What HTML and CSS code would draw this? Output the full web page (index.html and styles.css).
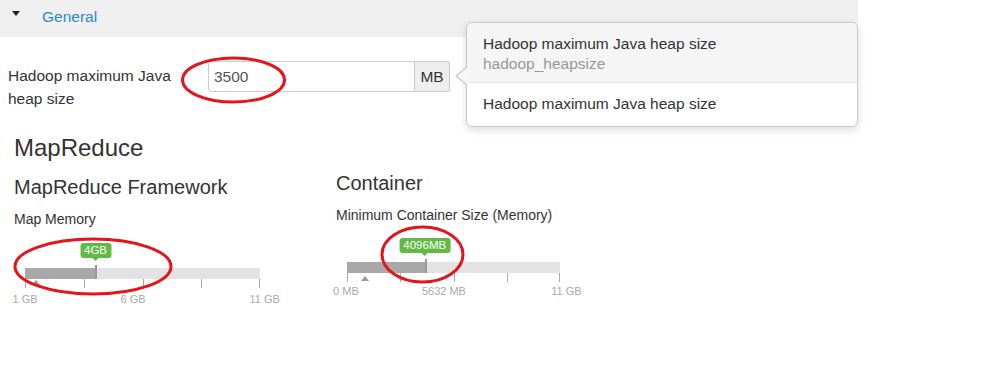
FILE: index.html
```html
<!DOCTYPE html>
<html lang="en">
<head>
    <meta charset="UTF-8">
    <title>Customize Services</title>
    <link rel="stylesheet" href="styles.css">
</head>
<body>
    <div class="page">
        <div class="panel-heading">
            <span class="caret"></span>
            <a class="panel-title" href="#">General</a>
        </div>

        <div class="form-row">
            <label class="control-label">Hadoop maximum Java heap size</label>
            <div class="input-group">
                <input class="form-control" type="text" value="3500">
                <span class="input-addon">MB</span>
            </div>
        </div>

        <div class="popover">
            <div class="popover-row active">
                <div>Hadoop maximum Java heap size</div>
                <div class="muted">hadoop_heapsize</div>
            </div>
            <div class="popover-row">Hadoop maximum Java heap size</div>
        </div>

        <div class="section">
            <h2>MapReduce</h2>
            <div class="columns">
                <div class="column first">
                    <h3>MapReduce Framework</h3>
                    <div class="slider-label">Map Memory</div>
                    <div class="slider">
                        <span class="badge" style="left: 30%">4GB</span>
                        <div class="track">
                            <div class="fill" style="width: 30%"></div>
                            <div class="handle" style="left: 30%"></div>
                        </div>
                        <span class="tick t0"></span>
                        <span class="tick t1"></span>
                        <span class="tick t2"></span>
                        <span class="tick t3"></span>
                        <span class="tick t4"></span>
                        <span class="marker" style="left: 11px"></span>
                        <span class="tick-label" style="left: 0%">1 GB</span>
                        <span class="tick-label" style="left: 46%">6 GB</span>
                        <span class="tick-label" style="left: 102%">11 GB</span>
                    </div>
                </div>
                <div class="column">
                    <h3>Container</h3>
                    <div class="slider-label">Minimum Container Size (Memory)</div>
                    <div class="slider narrow">
                        <span class="badge" style="left: 36.5%">4096MB</span>
                        <div class="track">
                            <div class="fill" style="width: 37%"></div>
                            <div class="handle" style="left: 37%"></div>
                        </div>
                        <span class="tick t0"></span>
                        <span class="tick t1"></span>
                        <span class="tick t2"></span>
                        <span class="tick t3"></span>
                        <span class="tick t4"></span>
                        <span class="marker" style="left: 18px"></span>
                        <span class="tick-label" style="left: -0.5%">0 MB</span>
                        <span class="tick-label" style="left: 45.5%">5632 MB</span>
                        <span class="tick-label" style="left: 103%">11 GB</span>
                    </div>
                </div>
            </div>
        </div>

        <!-- red marks drawn over the screenshot -->
        <svg class="annotations" width="998" height="368" viewBox="0 0 998 368">
            <ellipse cx="233.5" cy="80" rx="51" ry="22" />
            <ellipse cx="93" cy="266.5" rx="78" ry="27.5" />
            <ellipse cx="422.5" cy="254.5" rx="40.5" ry="27.5" />
        </svg>
    </div>
</body>
</html>
```

FILE: styles.css
```css
body {
    margin: 0;
    font-family: "Liberation Sans", Arial, sans-serif;
    color: #333;
    background-color: white;
}

.page {
    position: relative;
    width: 858px;
    height: 368px;
}

.panel-heading {
    height: 37px;
    box-sizing: border-box;
    padding: 7px 0 0 12px;
    background-color: #f0f0f0;
    display: flex;
    align-items: flex-start;
}

.caret {
    width: 0;
    height: 0;
    margin-top: 4px;
    margin-right: 22px;
    border-left: 4.5px solid transparent;
    border-right: 4.5px solid transparent;
    border-top: 5px solid #222;
}

.panel-title {
    font-size: 15.5px;
    line-height: 20px;
    color: #2a8ad2;
    text-decoration: none;
}

.form-row {
    display: flex;
    margin-top: 24px;
    padding-left: 8px;
}

.control-label {
    width: 200px;
    padding-top: 3px;
    font-size: 15.5px;
    line-height: 23px;
}

.input-group {
    display: flex;
    height: 31px;
}

.form-control {
    width: 207px;
    height: 31px;
    box-sizing: border-box;
    margin: 0;
    padding: 0 5px;
    border: 1px solid #ccc;
    border-radius: 3px 0 0 3px;
    font-family: "Liberation Sans", Arial, sans-serif;
    font-size: 15.5px;
    color: #555;
}

.input-addon {
    width: 35px;
    box-sizing: border-box;
    border: 1px solid #ccc;
    border-left: none;
    border-radius: 0 3px 3px 0;
    background-color: #eee;
    font-size: 15.5px;
    line-height: 29px;
    text-align: center;
}

.popover {
    position: absolute;
    left: 466px;
    top: 22px;
    width: 392px;
    box-sizing: border-box;
    background-color: white;
    border: 1px solid #c8c8c8;
    border-radius: 6px;
    box-shadow: 0 3px 8px rgba(0, 0, 0, 0.15);
    font-size: 15.5px;
    line-height: 20px;
}

.popover::before,
.popover::after {
    content: "";
    position: absolute;
    top: 44px;
    border-style: solid;
    border-color: transparent;
}

.popover::before {
    left: -12px;
    border-width: 9px 11px 9px 0;
    border-right-color: #c8c8c8;
}

.popover::after {
    left: -10px;
    border-width: 9px 11px 9px 0;
    border-right-color: #f7f7f7;
}

.popover-row {
    padding: 11px 16px 12px;
}

.popover-row.active {
    padding-bottom: 8px;
    background-color: #f5f5f5;
    border-bottom: 1px solid #e6e6e6;
    border-radius: 6px 6px 0 0;
}

.muted {
    color: #999;
}

.section {
    padding-left: 14px;
}

h2 {
    margin: 24px 0 0;
    font-size: 24px;
    line-height: 28px;
    font-weight: normal;
}

h3 {
    margin: 0;
    font-size: 20px;
    line-height: 24px;
    font-weight: normal;
}

.columns {
    display: flex;
    margin-top: 9px;
}

.column.first {
    width: 322px;
    padding-top: 4px;
}

.slider-label {
    margin-top: 11px;
    font-size: 14px;
    line-height: 18px;
}

.slider {
    position: relative;
    width: 235px;
    height: 64px;
    margin: 15px 0 0 11px;
}

.slider.narrow {
    width: 213px;
    margin-top: 14px;
}

.narrow .track {
    top: 24px;
}

.narrow .tick {
    top: 35px;
}

.narrow .marker {
    top: 38px;
}

.narrow .tick-label {
    top: 46px;
}

.track {
    position: absolute;
    left: 0;
    right: 0;
    top: 25px;
    height: 11px;
    background-color: #e3e3e3;
}

.fill {
    height: 100%;
    background-color: #a8a8a8;
}

.handle {
    position: absolute;
    top: -3px;
    width: 2px;
    height: 14px;
    margin-left: -1px;
    background-color: #999;
}

.badge {
    position: absolute;
    top: 0;
    transform: translateX(-50%);
    padding: 0 4px;
    height: 15px;
    line-height: 15px;
    border-radius: 3px;
    background-color: #62b946;
    color: white;
    font-size: 11.5px;
    white-space: nowrap;
}

.badge::after {
    content: "";
    position: absolute;
    left: 50%;
    bottom: -3px;
    margin-left: -3px;
    border-left: 3px solid transparent;
    border-right: 3px solid transparent;
    border-top: 3px solid #62b946;
}

.tick {
    position: absolute;
    top: 36px;
    width: 1px;
    height: 9px;
    background-color: #aaa;
}

.t0 { left: 0; }
.t1 { left: 25%; }
.t2 { left: 50%; }
.t3 { left: 75%; }
.t4 { left: calc(100% - 1px); }

.marker {
    position: absolute;
    top: 37px;
    margin-left: -4px;
    border-left: 4px solid transparent;
    border-right: 4px solid transparent;
    border-bottom: 5px solid #999;
}

.tick-label {
    position: absolute;
    top: 49px;
    transform: translateX(-50%);
    font-size: 11px;
    line-height: 14px;
    color: #aaa;
    white-space: nowrap;
}

.annotations {
    position: absolute;
    left: 0;
    top: 0;
    pointer-events: none;
}

.annotations ellipse {
    fill: none;
    stroke: #e5131c;
    stroke-width: 3;
}
```
